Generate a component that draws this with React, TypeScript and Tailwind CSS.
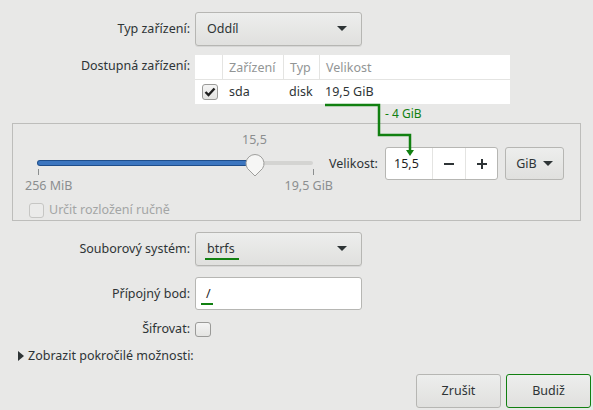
import * as React from 'react';

const font = { fontFamily: '"Noto Sans", "Open Sans", sans-serif' };

const Caret = () => (
  <svg width="10" height="6" viewBox="0 0 10 6" className="shrink-0">
    <path d="M0 0 L10 0 L5 5 Z" fill="#2e3436" />
  </svg>
);

const Combo = ({ value, underline }: { value: string; underline?: boolean }) => (
  <div className="flex h-[34px] w-[167px] items-center justify-between rounded-[3px] border border-[#b6b6b3] bg-gradient-to-b from-[#edeeed] to-[#e0e0de] pl-[11px] pr-[14px] shadow-[0_1px_0_rgba(0,0,0,0.07)]">
    <span className="relative">
      {value}
      {underline && (
        <span className="absolute -left-[2px] -right-[4px] bottom-[-3px] h-[2px] bg-[#118011]" />
      )}
    </span>
    <Caret />
  </div>
);

const Row = ({ label, children, className }: { label: string; children: React.ReactNode; className?: string }) => (
  <div className={`flex items-center ${className ?? ''}`}>
    <div className="w-[190px] text-right">{label}</div>
    <div className="ml-[5px]">{children}</div>
  </div>
);

export default function App() {
  return (
    <div
      className="relative h-[410px] w-[593px] overflow-hidden bg-[#e8e8e7] text-[12.5px] leading-[16px] text-[#2e3436]"
      style={font}
    >
      <Row label="Typ zařízení:" className="pt-[12px]">
        <Combo value="Oddíl" />
      </Row>

      <div className="mt-[9px] flex items-start">
        <div className="w-[190px] pt-[3px] text-right">Dostupná zařízení:</div>
        <div className="ml-[5px] w-[315px] bg-white">
          <div className="flex h-[25px] border-b border-[#e4e4e2] text-[#929595]">
            <div className="w-[28px] border-r border-[#e4e4e2]" />
            <div className="w-[61px] border-r border-[#e4e4e2] pl-[6px] leading-[25px]">Zařízení</div>
            <div className="w-[36px] border-r border-[#e4e4e2] pl-[6px] leading-[25px]">Typ</div>
            <div className="flex-1 pl-[6px] leading-[25px]">Velikost</div>
          </div>
          <div className="flex h-[24px] items-center">
            <div className="flex w-[29px] justify-center">
              <div className="flex h-[16px] w-[16px] items-center justify-center rounded-[3px] border border-[#9a9a98] bg-gradient-to-b from-[#f4f4f4] to-[#e4e4e2]">
                <svg width="12" height="10" viewBox="0 0 12 10">
                  <path d="M1.5 5 L4.5 8 L10.5 1.5" fill="none" stroke="#1f1f1f" strokeWidth="2.4" />
                </svg>
              </div>
            </div>
            <div className="w-[61px] pl-[5px]">sda</div>
            <div className="w-[36px] pl-[4px]">disk</div>
            <div className="flex-1 pl-[4px]">19,5 GiB</div>
          </div>
        </div>
      </div>

      {/* annotation: size change */}
      <svg className="absolute left-0 top-0" width="593" height="160" viewBox="0 0 593 160">
        <path d="M325 105 H379 V135 H410 V152" fill="none" stroke="#118011" strokeWidth="2.5" />
        <path d="M406 150 L410 156 L414 150 Z" fill="#118011" />
      </svg>
      <div className="absolute left-[385px] top-[106px] text-[12px] text-[#118011]">- 4 GiB</div>

      <div className="mx-[12px] mt-[19px] flex h-[98px] flex-col border border-[#bdbdbb] px-[16px]">
        <div className="flex">
          <div className="relative h-[75px] w-[300px]">
            <div className="absolute left-[213px] top-[8px] text-[#8b8e8f]">15,5</div>
            <div className="absolute left-[9px] top-[37px] h-[4px] w-[275px] rounded-full bg-[#d4d4d2]" />
            <div className="absolute left-[9px] top-[37px] h-[4px] w-[222px] rounded-full bg-[#3c76c0] shadow-[0_0_0_1px_#1f4e8b]" />
            <svg className="absolute left-[215px] top-[28px]" width="22" height="26" viewBox="0 0 22 26">
              <path
                d="M11 24 L3.5 16.5 A9 9 0 1 1 18.5 16.5 Z"
                fill="#f6f6f5"
                stroke="#9e9e9c"
                strokeWidth="1"
              />
            </svg>
            <div className="absolute left-[9px] top-[45px] h-[6px] w-[1px] bg-[#8b8e8f]" />
            <div className="absolute left-[284px] top-[45px] h-[6px] w-[1px] bg-[#8b8e8f]" />
            <div className="absolute left-[-4px] top-[54px] text-[#8b8e8f]">256 MiB</div>
            <div className="absolute right-[-8px] top-[54px] text-[#8b8e8f]">19,5 GiB</div>
          </div>
          <div className="ml-[4px] mt-[23px] flex h-[33px] items-center">
            <span className="w-[52px]">Velikost:</span>
            <div className="ml-[4px] flex h-[33px] w-[113px] rounded-[3px] border border-[#b6b6b3] bg-white">
              <div className="flex w-[46px] items-center pl-[8px] text-[#1e1e1e]">15,5</div>
              <div className="flex w-[33px] items-center justify-center border-l border-[#e4e4e2]">
                <span className="h-[2px] w-[10px] bg-[#2e3436]" />
              </div>
              <div className="relative flex flex-1 items-center justify-center border-l border-[#e4e4e2]">
                <span className="h-[2px] w-[10px] bg-[#2e3436]" />
                <span className="absolute h-[10px] w-[2px] bg-[#2e3436]" />
              </div>
            </div>
            <div className="ml-[7px] flex h-[33px] w-[59px] items-center justify-center gap-[6px] rounded-[3px] border border-[#b6b6b3] bg-gradient-to-b from-[#edeeed] to-[#e0e0de]">
              <span>GiB</span>
              <Caret />
            </div>
          </div>
        </div>
        <div className="mt-[3px] flex items-center text-[#a3a5a5]">
          <div className="h-[15px] w-[15px] rounded-[3px] border border-[#c6c6c4] bg-[#ebebea]" />
          <span className="ml-[5px]">Určit rozložení ručně</span>
        </div>
      </div>

      <Row label="Souborový systém:" className="mt-[11px]">
        <Combo value="btrfs" underline />
      </Row>

      <Row label="Přípojný bod:" className="mt-[11px]">
        <div className="flex h-[33px] w-[167px] items-center rounded-[3px] border border-[#b6b6b3] bg-white pl-[10px] text-[#1e1e1e]">
          <span className="relative">
            /
            <span className="absolute -left-[5px] bottom-[-3px] h-[2px] w-[12px] bg-[#118011]" />
          </span>
        </div>
      </Row>

      <Row label="Šifrovat:" className="mt-[11px]">
        <div className="h-[15px] w-[16px] rounded-[3px] border border-[#9a9a98] bg-gradient-to-b from-[#f4f4f4] to-[#e4e4e2]" />
      </Row>

      <div className="mt-[11px] flex items-center pl-[18px]">
        <svg width="6" height="10" viewBox="0 0 6 10">
          <path d="M0 0 L6 5 L0 10 Z" fill="#2e3436" />
        </svg>
        <span className="ml-[4px]">Zobrazit pokročilé možnosti:</span>
      </div>

      <div className="mt-[10px] flex justify-end gap-[5px] pr-[2px]">
        <div className="flex h-[34px] w-[85px] items-center justify-center rounded-[3px] border border-[#b6b6b3] bg-gradient-to-b from-[#edeeed] to-[#e0e0de]">
          Zrušit
        </div>
        <div className="flex h-[34px] w-[85px] items-center justify-center rounded-[3px] border border-[#118011] bg-gradient-to-b from-[#edeeed] to-[#e0e0de]">
          Budiž
        </div>
      </div>
    </div>
  );
}
